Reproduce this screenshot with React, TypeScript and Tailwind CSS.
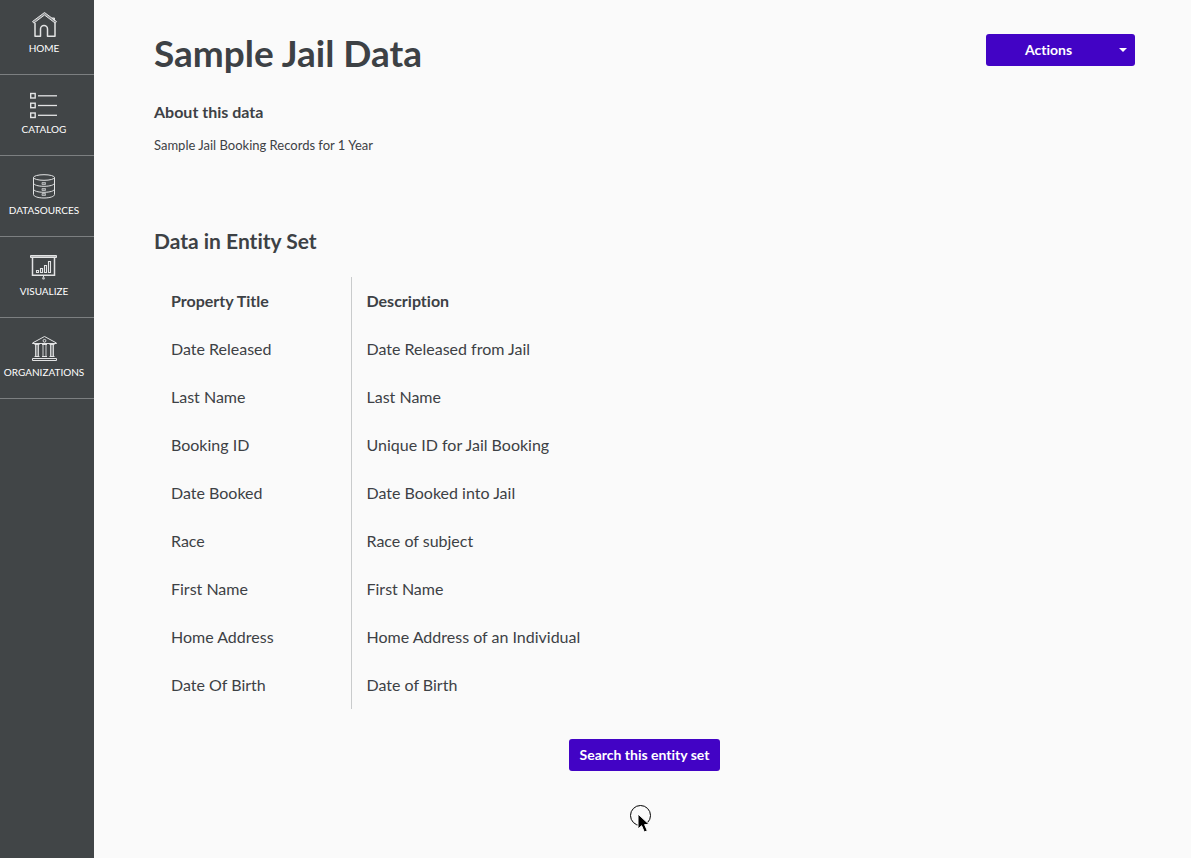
import type { ReactNode } from "react";

function Icon({ children }: { children: ReactNode }) {
  return (
    <svg
      className="h-7 w-7 shrink-0"
      viewBox="0 0 28 28"
      fill="none"
      stroke="#e2e3e4"
      strokeWidth="1"
      aria-hidden="true"
    >
      {children}
    </svg>
  );
}

const HomeIcon = () => (
  <Icon>
    <path d="M2.500 11.500 14.500 2.500l12 9-1.300 1.600L14.500 5 3.800 13.100z" fill="#8f9294" strokeLinejoin="round" />
    <path d="M22 8h2.500v2.500z" fill="#c4c6c7" />
    <path d="M5 13v13.300h5.500V19a3.500 3.500 0 0 1 7 0v7.300H25V13" strokeWidth="1.500" strokeLinejoin="round" />
  </Icon>
);

const CatalogIcon = () => (
  <Icon>
    {[2.5, 12.2, 22].map((y) => (
      <g key={y}>
        <rect x="0.700" y={y} width="4.500" height="4.500" strokeWidth="1.400" />
        <path d={`M8 ${y + 2.3}h19`} strokeWidth="1.300" />
      </g>
    ))}
  </Icon>
);

const DatabaseIcon = () => (
  <Icon>
    <ellipse cx="14" cy="5.500" rx="10.500" ry="2.800" />
    <path d="M3.500 5.500v17c0 1.900 4.500 3.500 10.500 3.500s10.500-1.600 10.500-3.500v-17" />
    <path d="M3.500 11c0 1.900 4.500 3.300 10.500 3.300S24.500 12.900 24.500 11M3.500 17c0 1.900 4.500 3.300 10.500 3.300s10.500-1.400 10.500-3.300" />
    <path d="M12 10.500h3.500v2H12zM12 16.500h3.500v2H12zM12 21.500h3.500v2H12z" fill="#8f9294" strokeWidth="0.800" opacity="0.800" />
  </Icon>
);

const VisualizeIcon = () => (
  <Icon>
    <path d="M0.500 2.500h26v2h-26z" fill="#b5b7b8" />
    <path d="M2.500 4.500v17.800h22V4.500" strokeWidth="1.500" />
    <path d="M6.500 17.500h2v2h-2zM10.500 15.500h2v4h-2zM14.500 12.500h2v7h-2zM18.500 8.500h2v11h-2z" strokeWidth="1.100" />
    <path d="M13.500 22.500v2" />
    <circle cx="13.500" cy="25.300" r="1.400" fill="#b8babb" stroke="none" />
  </Icon>
);

const OrganizationsIcon = () => (
  <Icon>
    <path d="M2.500 9 14.500 2.500 26.500 9v0.500h-24z" strokeLinejoin="round" />
    <circle cx="14.500" cy="6.800" r="1.400" />
    <path d="M5.500 10v13M7 10v13M8.500 10v13M13 10v13M16 10v13M20.500 10v13M22 10v13M23.500 10v13" strokeWidth="0.900" />
    <path d="M4.500 10.500h5M12 10.500h5M19.500 10.500h5M4.500 22.500h5M12 22.500h5M19.500 22.500h5" />
    <path d="M2.500 24.500h24v2h-24z" />
  </Icon>
);

const navItems = [
  { label: "HOME", icon: <HomeIcon /> },
  { label: "CATALOG", icon: <CatalogIcon /> },
  { label: "DATASOURCES", icon: <DatabaseIcon /> },
  { label: "VISUALIZE", icon: <VisualizeIcon /> },
  { label: "ORGANIZATIONS", icon: <OrganizationsIcon /> },
];

const properties = [
  ["Date Released", "Date Released from Jail"],
  ["Last Name", "Last Name"],
  ["Booking ID", "Unique ID for Jail Booking"],
  ["Date Booked", "Date Booked into Jail"],
  ["Race", "Race of subject"],
  ["First Name", "First Name"],
  ["Home Address", "Home Address of an Individual"],
  ["Date Of Birth", "Date of Birth"],
];

function Sidebar() {
  return (
    <nav className="w-[94px] shrink-0 bg-[#414547]">
      <ul>
        {navItems.map((item) => (
          <li key={item.label} className="group border-b border-[#7c7f81]">
            <a
              href="#"
              className="flex flex-col items-center gap-0.5 pt-4 pr-1.5 pb-[18px] text-[10px] leading-4 text-white group-first:pt-2.5"
            >
              {item.icon}
              {item.label}
            </a>
          </li>
        ))}
      </ul>
    </nav>
  );
}

function Pointer() {
  return (
    <svg
      className="pointer-events-none absolute top-[804px] left-[629px] h-8 w-6"
      viewBox="0 0 24 32"
      aria-hidden="true"
    >
      <circle cx="11.500" cy="11.500" r="10" fill="none" stroke="#000" />
      <path
        d="M9 10v15l3.600-3.300 2.700 6.300 3-1.300-2.700-6.100h4.700z"
        fill="#000"
        stroke="#fff"
        strokeWidth="1"
      />
    </svg>
  );
}

export default function App() {
  return (
    <div className="relative flex min-h-screen bg-[#fafafa] font-['Lato',sans-serif] text-[#3d4145] [font-variant-ligatures:none]">
      <Sidebar />
      <main className="min-w-0 flex-1 pt-8 pr-14 pb-10 pl-[60px]">
        <header className="flex items-start justify-between">
          <h1 className="text-[37px] leading-[42px] font-bold">Sample Jail Data</h1>
          <button
            type="button"
            className="mt-0.5 flex h-8 w-[149px] items-center gap-2 rounded-[3px] bg-[#4203c5] pr-2 text-sm font-bold text-white"
          >
            <span className="flex-1">Actions</span>
            <svg className="h-1 w-2" viewBox="0 0 8 4" fill="#fff" aria-hidden="true">
              <path d="M0 0h8L4 4z" />
            </svg>
          </button>
        </header>

        <section className="mt-[26px]">
          <h2 className="text-base leading-6 font-bold">About this data</h2>
          <p className="mt-[11px] text-[13px] leading-5">Sample Jail Booking Records for 1 Year</p>
        </section>

        <section className="mt-[70px]">
          <h2 className="text-[21px] leading-8 font-bold">Data in Entity Set</h2>
          <table className="mt-5 border-collapse text-left text-base">
            <thead>
              <tr className="h-12">
                <th className="w-[197px] border-r border-[#c9cbcc] pl-[17px] font-bold">Property Title</th>
                <th className="pl-[15px] font-bold">Description</th>
              </tr>
            </thead>
            <tbody>
              {properties.map(([title, description]) => (
                <tr key={title} className="h-12">
                  <td className="border-r border-[#c9cbcc] pl-[17px]">{title}</td>
                  <td className="pl-[15px]">{description}</td>
                </tr>
              ))}
            </tbody>
          </table>
        </section>

        <div className="mt-[30px] flex justify-center">
          <button
            type="button"
            className="h-8 rounded-[3px] bg-[#4203c5] px-[11px] text-sm font-bold text-white"
          >
            Search this entity set
          </button>
        </div>
      </main>
      <Pointer />
    </div>
  );
}
